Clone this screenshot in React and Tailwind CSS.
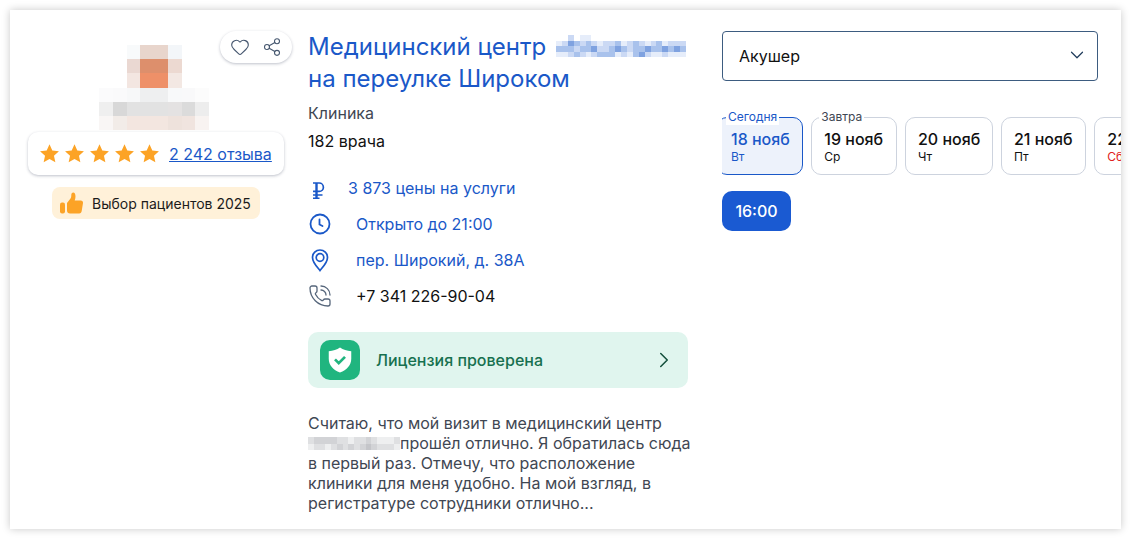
import React from "react";
import { ChevronDown, ChevronRight, Heart, PhoneCall, Share2 } from "lucide-react";

const avatar = [
  ["#ffffff", "#ffffff", "#f8fafb", "#e8d5cc", "#e8d5cc", "#f3f6f9", "#ffffff", "#ffffff"],
  ["#ffffff", "#ffffff", "#ead8d2", "#dd8f6c", "#dd8f6c", "#ecd9d1", "#ffffff", "#ffffff"],
  ["#ffffff", "#ffffff", "#f3e6e1", "#ee9068", "#ee9068", "#f3e8e3", "#ffffff", "#ffffff"],
  ["#fbfbfc", "#fafafb", "#f7f8f9", "#eeeff0", "#eeeff0", "#f8f9fa", "#f9f9fa", "#fcfcfc"],
  ["#efefef", "#d8d8d8", "#e2e2e2", "#e2e2e2", "#e2e2e2", "#e4e2e2", "#dbdbdb", "#ededed"],
  ["#f9f6f5", "#f2ece8", "#f3e6e0", "#f3e6e0", "#f3e6e0", "#eee2dc", "#f0e4df", "#f8f3f1"],
];

// pixelated name in the title and in the review
const blueShades = { ".": "#ffffff", a: "#e6edfa", b: "#cbd9f4", c: "#a9c2ec", d: "#7fa2e0" };
const titleBlur = [
  "..b.aa................",
  "abdcbcbabbcabcbabcabbb",
  "cccbccdbbcdcbccdccdcdc",
  "aabcbabcccabacdbaabaaa",
];
const greyShades = { a: "#eeeff0", b: "#dfe0e2", c: "#d2d3d6", d: "#c4c5c9" };
const reviewBlur = [
  "bccccbbabbcbaaab",
  "abbabcbcbcdcbbba",
];

const days = [
  { date: "19 нояб", day: "Ср", label: "Завтра", width: "w-[85.4px]" },
  { date: "20 нояб", day: "Чт", width: "w-[87.7px]" },
  { date: "21 нояб", day: "Пт", width: "w-[85px]" },
  { date: "22 нояб", day: "Сб", width: "w-[85px]", red: true },
];

const Star = () => (
  <svg viewBox="0 0 24 24" className="w-[21px] h-[21px] fill-[#fca326]">
    <path d="M12 1.500l3.200 7.100 7.600.8-5.700 5.100 1.600 7.600L12 18.300l-6.700 3.800 1.600-7.600L1.200 9.400l7.600-.8z" />
  </svg>
);

const Ruble = () => (
  <svg viewBox="0 0 24 24" className="w-[24px] h-[24px] fill-none stroke-[#1a58c8]" strokeWidth="1.500">
    <path d="M4 7h6.200a4.200 4.200 0 0 1 0 8.400H4" strokeWidth="1.700" />
    <path d="M7.500 7v15" strokeWidth="2.400" />
    <path d="M4 22.200h6.500M4 19h9.500" />
  </svg>
);

const ClockIcon = () => (
  <svg viewBox="0 0 24 24" className="w-[24px] h-[24px] fill-none stroke-[#1a58c8]" strokeWidth="1.800" strokeLinecap="round">
    <circle cx="12" cy="12" r="9.500" />
    <path d="M11.500 7.500v5l3 1.500" />
  </svg>
);

const PinIcon = () => (
  <svg viewBox="0 0 24 24" className="w-[24px] h-[24px] fill-none stroke-[#1a58c8]" strokeWidth="1.700">
    <path d="M12 22.500c-1-1.400-7.500-7.500-7.500-13a7.500 7.500 0 0 1 15 0c0 5.500-6.500 11.600-7.500 13z" />
    <circle cx="12" cy="9.500" r="3.800" />
  </svg>
);

const PixelBlur = ({ rows, shades, className }) => (
  <span className={className}>
    {rows.flatMap((row, r) =>
      row.split("").map((c, i) => (
        <span key={`${r}-${i}`} style={{ backgroundColor: shades[c] }} />
      ))
    )}
  </span>
);

const App = () => {
  return (
    <div className="w-[1131px] h-[539px] bg-white p-[10px] font-['Inter',sans-serif] overflow-hidden">
      <div className="relative w-full h-full bg-white flex overflow-hidden shadow-[0_0_8px_rgba(0,0,0,0.22)]">
        {/* left column */}
        <div className="w-[298px] shrink-0 flex flex-col items-center pt-[35px] pl-[18px] pr-[24px]">
          <div className="mr-[4px] grid grid-cols-[repeat(8,13.75px)] grid-rows-[repeat(6,14.2px)] shrink-0">
            {avatar.flat().map((color, i) => (
              <div key={i} style={{ backgroundColor: color }} />
            ))}
          </div>
          <div className="mt-[2px] w-[256px] h-[43px] shrink-0 rounded-[10px] bg-white shadow-[0_1px_3px_rgba(40,50,80,0.3)] flex items-center pl-[11px] gap-[4px]">
            <Star />
            <Star />
            <Star />
            <Star />
            <Star />
            <a className="ml-[5px] text-[16px] underline text-[#1a58c8]">2 242 отзыва</a>
          </div>
          <div className="mt-[12px] h-[32px] rounded-[8px] bg-[#fff1d9] flex items-center pl-[8px] pr-[9px] gap-[8px]">
            <svg viewBox="0 0 24 24" className="w-[24px] h-[24px] fill-[#fca326]">
              <rect x="0" y="11.500" width="5" height="11" rx="2" />
              <path d="M7 12l3.500-4.500c.7-1 .8-2 .8-3.500 0-1.500.7-2.500 1.900-2.500 1.400 0 2.300 1.500 2.300 4 0 1.500-.3 2.800-.8 4h6c1.500 0 2.500 1 2.300 2.500l-1.300 8c-.3 1.500-1 2.500-2.500 2.500H10c-1.800 0-3-1-3-3z" />
            </svg>
            <span className="text-[14px] text-[#1b1b1b]">Выбор пациентов 2025</span>
          </div>
        </div>

        <div className="absolute left-[210px] top-[21px] w-[72px] h-[32px] rounded-full bg-white shadow-[0_1px_3px_rgba(40,50,80,0.3)] flex items-center justify-center gap-[12px] text-[#46576f]">
          <Heart size={20} strokeWidth={1.3} />
          <Share2 size={20} strokeWidth={1.3} />
        </div>

        {/* middle column */}
        <div className="w-[380px] shrink-0 pt-[21px]">
          <h2 className="text-[24px] leading-[32px] text-[#1a58c8]">
            Медицинский центр{" "}
            <PixelBlur
              rows={titleBlur}
              shades={blueShades}
              className="ml-[3px] mt-[4px] inline-grid align-top w-[130px] h-[22px] grid-cols-[repeat(22,1fr)] grid-rows-4"
            />
            <br />
            на переулке Широком
          </h2>
          <div className="mt-[6px] text-[16px] leading-[24px] text-[#3f4753]">Клиника</div>
          <div className="mt-[4px] text-[16px] leading-[24px] text-[#111]">182 врача</div>

          <div className="mt-[23px] flex flex-col gap-[12px] text-[16px] leading-[24px]">
            <div className="flex items-center text-[#1a58c8]">
              <span className="w-[40px] pl-[1px]"><Ruble /></span>
              3 873 цены на услуги
            </div>
            <div className="flex items-center text-[#1a58c8]">
              <span className="w-[48px]"><ClockIcon /></span>
              Открыто до 21:00
            </div>
            <div className="flex items-center text-[#1a58c8]">
              <span className="w-[48px]"><PinIcon /></span>
              пер. Широкий, д. 38А
            </div>
            <div className="flex items-center text-[#111]">
              <span className="w-[48px] text-[#56667b]"><PhoneCall size={24} strokeWidth={1.3} /></span>
              +7 341 226-90-04
            </div>
          </div>

          <div className="mt-[24px] h-[56px] rounded-[10px] bg-[#e0f5ee] flex items-center pl-[12px] pr-[11px]">
            <div className="w-[40px] h-[40px] rounded-[10px] bg-[#20b57f] flex items-center justify-center">
              <svg viewBox="0 0 24 24" className="w-[30px] h-[30px]">
                <path fill="#fff" d="M12 2c2.500 1.800 5.500 2.700 9 3v6c0 5-3.500 9-9 11-5.500-2-9-6-9-11V5c3.500-.3 6.500-1.200 9-3z" />
                <path fill="none" stroke="#20b57f" strokeWidth="2.200" d="M8 11.500l3 3 5-5" />
              </svg>
            </div>
            <span className="ml-[16px] flex-1 text-[16px] font-[450] text-[#17704f]">Лицензия проверена</span>
            <ChevronRight size={26} strokeWidth={1.4} className="text-[#14503c]" />
          </div>

          <p className="mt-[25px] text-[16px] leading-[20px] text-[#3f4753] whitespace-nowrap">
            Считаю, что мой визит в медицинский центр
            <br />
            <PixelBlur
              rows={reviewBlur}
              shades={greyShades}
              className="mt-[4px] inline-grid align-top w-[92px] h-[13px] grid-cols-[repeat(16,1fr)] grid-rows-2"
            />
            прошёл отлично. Я обратилась сюда
            <br />
            в первый раз. Отмечу, что расположение
            <br />
            клиники для меня удобно. На мой взгляд, в
            <br />
            регистратуре сотрудники отлично...
          </p>
        </div>

        {/* right column */}
        <div className="flex-1 min-w-0 pl-[34px] pt-[21px] flex flex-col">
          <div className="w-[376px] h-[50px] shrink-0 rounded-[4px] border border-[#3d5c80] flex items-center justify-between pl-[16px] pr-[9px]">
            <span className="text-[16px] text-[#111]">Акушер</span>
            <ChevronDown size={22} strokeWidth={1.3} className="text-[#1e3a5a] -mt-[3px]" />
          </div>

          <div className="mt-[27px] pt-[9px] flex gap-[8.3px] overflow-hidden">
            <div className="relative w-[86px] h-[58px] shrink-0 -ml-[5px] rounded-[10px] border border-[#1a58c8] bg-[#edf2fb] text-[#1a58c8] pl-[13px] pt-[11px]">
              <span className="absolute left-[8px] -top-[9px] bg-white px-[2px] text-[12px] leading-[16px]">Сегодня</span>
              <div className="text-[16px] leading-[21px] font-medium">18 нояб</div>
              <div className="text-[12px] leading-[14px]">Вт</div>
            </div>
            {days.map((d) => (
              <div key={d.date} className={`relative ${d.width} h-[58px] shrink-0 rounded-[10px] border border-[#cdd3de] pl-[12px] pt-[11px] text-[#111]`}>
                {d.label && (
                  <span className="absolute left-[7px] -top-[9px] bg-white px-[2px] text-[12px] leading-[16px] text-[#3f4753]">{d.label}</span>
                )}
                <div className="text-[16px] leading-[21px] font-medium">{d.date}</div>
                <div className={d.red ? "text-[12px] leading-[14px] text-[#e02020]" : "text-[12px] leading-[14px]"}>{d.day}</div>
              </div>
            ))}
          </div>

          <button className="mt-[16px] w-[69px] h-[40px] rounded-[10px] bg-[#1a5ad2] text-white text-[16px] font-medium">16:00</button>
        </div>
      </div>
    </div>
  );
};

export default App;
